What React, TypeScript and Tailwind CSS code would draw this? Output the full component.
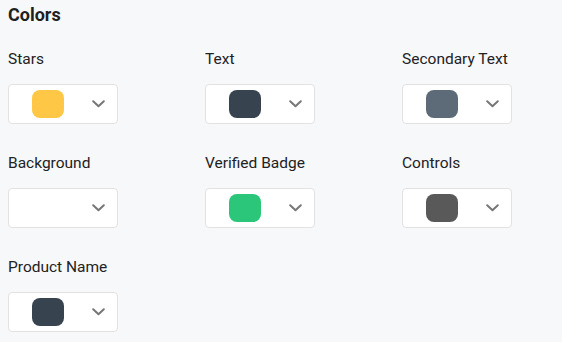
import React from "react";

type Item = { label: string; color: string | null };

const items: Item[] = [
  { label: "Stars", color: "#ffc745" },
  { label: "Text", color: "#37444f" },
  { label: "Secondary Text", color: "#5c6b77" },
  { label: "Background", color: null },
  { label: "Verified Badge", color: "#2cc67b" },
  { label: "Controls", color: "#595959" },
  { label: "Product Name", color: "#37444f" },
];

function Chevron() {
  return (
    <svg width="13" height="8" viewBox="0 0 13 8" fill="none">
      <polyline points="1.2,1.2 6.5,6.3 11.8,1.2" stroke="#777" strokeWidth="2" strokeLinecap="round" strokeLinejoin="round" />
    </svg>
  );
}

export default function App() {
  return (
    <div className="w-[562px] h-[342px] bg-[#f7f8fa] overflow-hidden px-2 pt-[3px]" style={{ fontFamily: "Roboto, 'Noto Sans', sans-serif" }}>
      <h2 className="text-[18px] leading-[24px] font-bold text-[#1f1f1f]">Colors</h2>
      <div className="mt-[22px] grid grid-cols-[197px_197px_152px] gap-y-[29px]">
        {items.map((it) => (
          <div key={it.label} className="flex flex-col">
            <div className="text-[15.5px] leading-[20px] text-[#222]">{it.label}</div>
            <div className="mt-[15px] w-[110px] h-[40px] bg-white border border-[#e2e2e2] rounded-[4px] flex items-center">
              <div className="ml-[23px] w-[32px] h-[28px] rounded-[8px]" style={{ background: it.color ?? "transparent" }} />
              <div className="ml-[28px]">
                <Chevron />
              </div>
            </div>
          </div>
        ))}
      </div>
    </div>
  );
}
